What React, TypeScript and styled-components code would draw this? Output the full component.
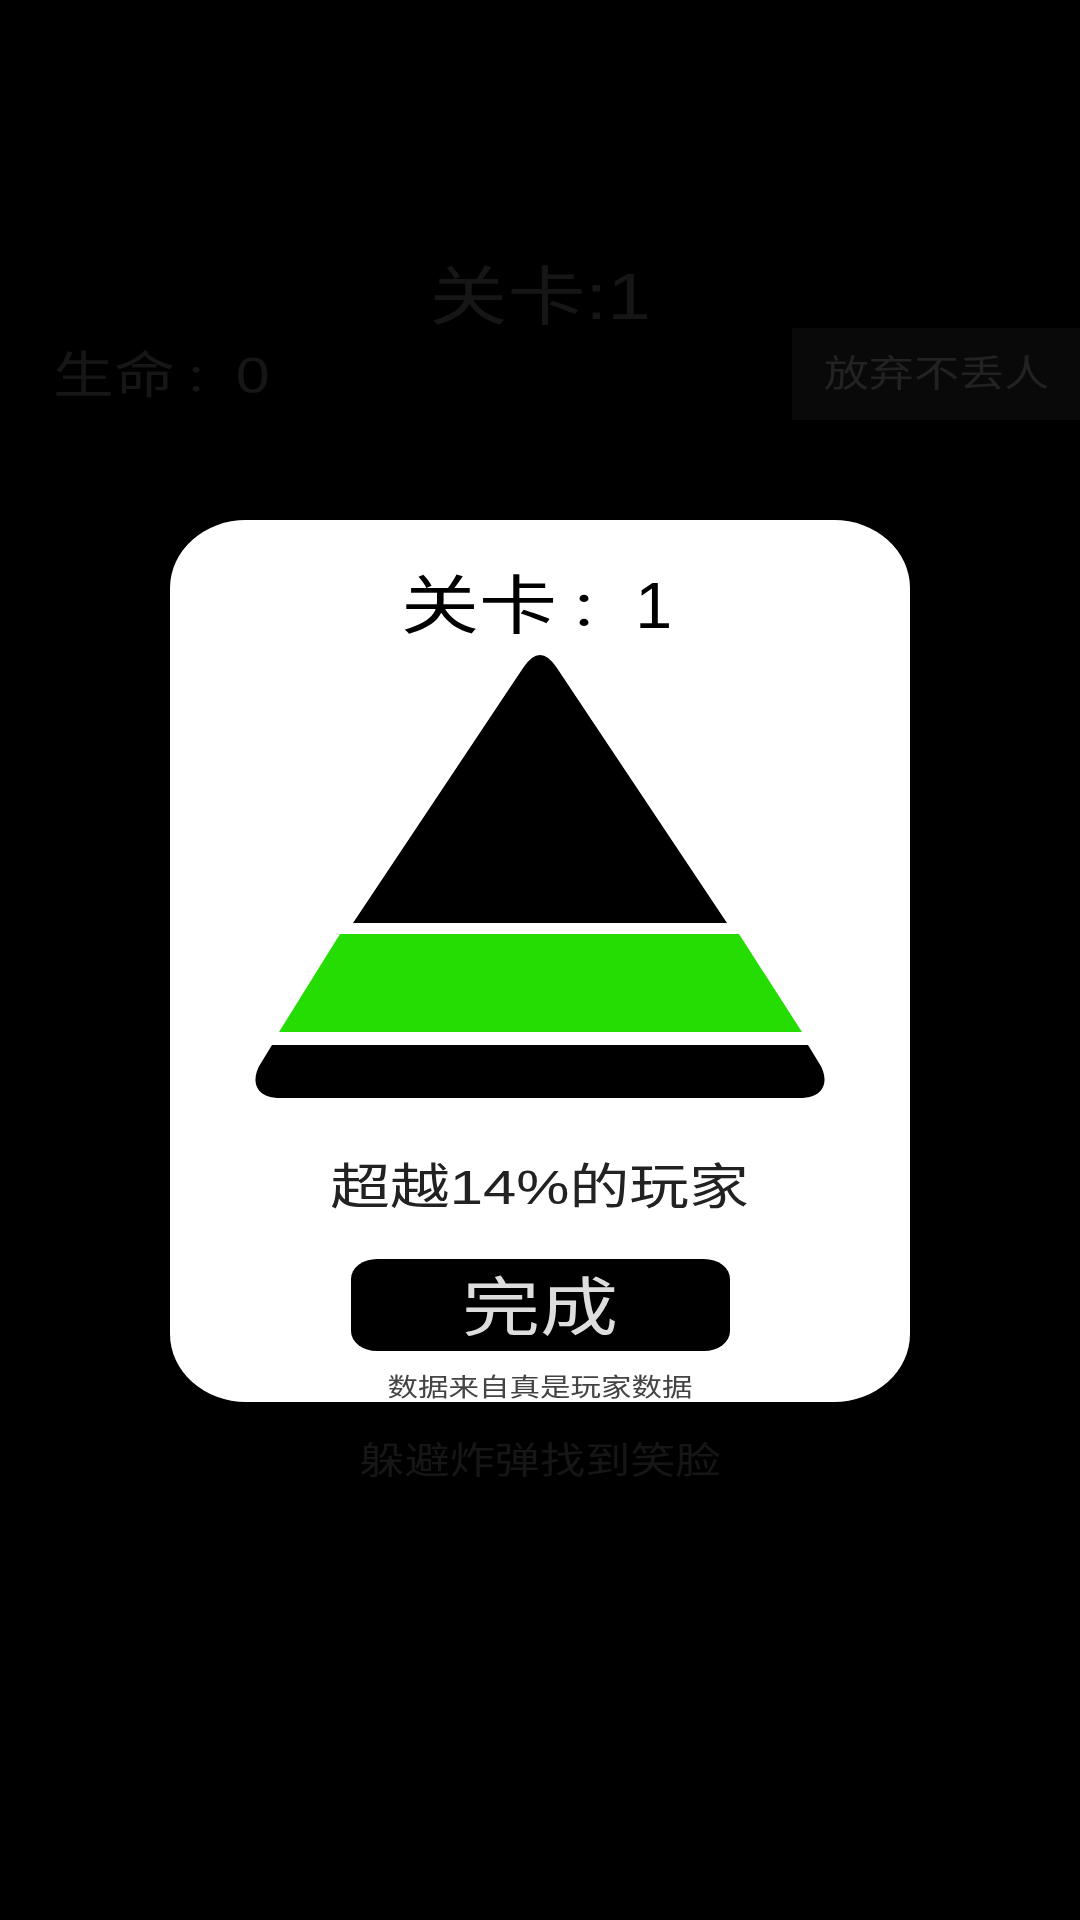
import React from "react";
import styled, { createGlobalStyle } from "styled-components";

const GlobalStyle = createGlobalStyle`
  html, body { margin: 0; padding: 0; background: #000; }
  body { font-family: "Liberation Sans", "Noto Sans CJK SC", sans-serif; }
`;

const Page = styled.div`
  position: relative;
  width: 1080px;
  height: 1920px;
  overflow: hidden;
  background: #000;
  padding-top: 265px;
  box-sizing: border-box;
`;

const StretchedText = styled.div<{ $size: number; $color: string }>`
  flex: none;
  height: ${(p) => p.$size}px;
  font-size: ${(p) => p.$size}px;
  line-height: ${(p) => p.$size}px;
  color: ${(p) => p.$color};
  white-space: nowrap;
  text-align: center;
  transform: scaleX(1.22);
  filter: blur(0.5px);
`;

const Colon = styled.span`
  font-family: "Noto Sans CJK TC", sans-serif;
  font-size: 0.75em;
  margin-left: -0.04em;
  margin-right: 0.37em;
`;

const NarrowDigit = styled.span`
  display: inline-block;
  transform: scaleX(0.85);
  transform-origin: left center;
`;

const LevelHeading = styled(StretchedText)`
  height: 63px;
`;

const StatusRow = styled.div`
  display: flex;
  align-items: center;
  justify-content: space-between;
  height: 92px;
  padding-left: 53px;
`;

const Lives = styled(StretchedText)`
  margin-top: 4px;
  text-align: left;
  transform-origin: left center;
`;

const GiveUpButton = styled.div`
  display: flex;
  align-items: center;
  justify-content: center;
  width: 288px;
  height: 92px;
  background: #090909;
`;

const Hint = styled(StretchedText)`
  margin-top: 1023px;
`;

const Overlay = styled.div`
  position: absolute;
  inset: 0;
  display: flex;
  justify-content: center;
  align-items: flex-start;
  padding-top: 520px;
  box-sizing: border-box;
`;

const Card = styled.div`
  display: flex;
  flex-direction: column;
  align-items: center;
  width: 740px;
  height: 882px;
  padding-top: 54px;
  box-sizing: border-box;
  background: #fff;
  border-radius: 76px / 68px;
  overflow: hidden;
`;

const Pyramid = styled.svg`
  display: block;
  flex: none;
  width: 580px;
  height: 450px;
  margin-top: 12px;
`;

const Score = styled(StretchedText)`
  margin-top: 63px;
`;

const DoneButton = styled.div`
  display: flex;
  align-items: center;
  justify-content: center;
  flex: none;
  width: 379px;
  height: 92px;
  margin-top: 47px;
  padding-top: 6px;
  box-sizing: border-box;
  background: #000;
  border-radius: 26px / 20px;
`;

const SourceNote = styled(StretchedText)`
  margin-top: 24px;
`;

export default function App() {
  return (
    <>
      <GlobalStyle />
      <Page>
        <LevelHeading $size={64} $color="#161616">关卡:1</LevelHeading>
        <StatusRow>
          <Lives $size={50} $color="#161616">
            生命<Colon>：</Colon>0
          </Lives>
          <GiveUpButton>
            <StretchedText $size={37} $color="#222">放弃不丢人</StretchedText>
          </GiveUpButton>
        </StatusRow>
        <Hint $size={37} $color="#161616">躲避炸弹找到笑脸</Hint>
        <Overlay>
          <Card>
            <StretchedText $size={64} $color="#000">
              关卡<Colon>：</Colon><NarrowDigit>1</NarrowDigit>
            </StretchedText>
            <Pyramid viewBox="250 650 580 450">
              <path
                fill="#000"
                d="M353 923 L523.4 667.5 Q540 642.5 556.6 667.5 L727 923 Z"
              />
              <polygon fill="#25dd02" points="340,934 739,934 802,1032 279,1032" />
              <path
                fill="#000"
                d="M272 1045 H808 L819 1063 C829 1078 827 1098 800 1098 H280 C253 1098 251 1078 261 1063 Z"
              />
            </Pyramid>
            <Score $size={49} $color="#222">超越14%的玩家</Score>
            <DoneButton>
              <StretchedText $size={64} $color="#ddd">完成</StretchedText>
            </DoneButton>
            <SourceNote $size={25} $color="#444">数据来自真是玩家数据</SourceNote>
          </Card>
        </Overlay>
      </Page>
    </>
  );
}
